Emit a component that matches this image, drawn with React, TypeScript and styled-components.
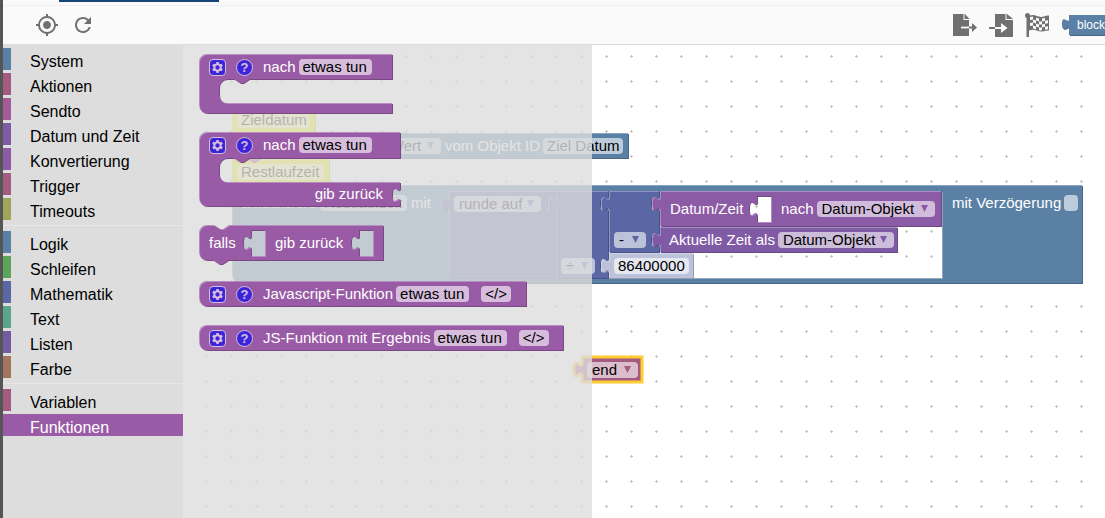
import React, { useId } from "react";
import styled, { createGlobalStyle } from "styled-components";
import { MdMyLocation, MdRefresh } from "react-icons/md";

const FONT = '"Liberation Sans", Arial, sans-serif';

const GlobalStyle = createGlobalStyle`
  * { box-sizing: border-box; }
  html, body { margin: 0; padding: 0; }
  body { background: #fff; font-family: ${FONT}; overflow: hidden; }
  button, input, select { font-family: inherit; }
`;

const color = {
  blue: "#5b80a5",
  rose: "#a55b80",
  purple: "#995ba5",
  math: "#5b67a5",
  number: "#bdc2db",
  convert: "#8c5ba5",
  date: "#805ba5",
  comment: "#f5f000",
};

/* ---------- page frame ---------- */

const Page = styled.div`
  display: flex;
  flex-direction: column;
  height: 100vh;
  border-left: 3px solid #555;
  background: #fafafa;
`;

const TabStrip = styled.div`
  flex: none;
  height: 6px;
  padding-left: 56px;
  border-bottom: 1px solid #efefef;
`;

const TabIndicator = styled.div`
  width: 160px;
  height: 2px;
  background: #164477;
`;

const Toolbar = styled.header`
  flex: none;
  display: flex;
  align-items: center;
  height: 39px;
  padding-left: 32px;
  gap: 12px;
  border-bottom: 1px solid #dcdcdc;
  background: #fafafa;
  overflow: hidden;
`;

const ToolButton = styled.button`
  display: flex;
  align-items: center;
  justify-content: center;
  width: 24px;
  height: 24px;
  padding: 0;
  border: 0;
  background: none;
  color: #707070;
  cursor: pointer;
`;

const ToolGroup = styled.div`
  display: flex;
  align-items: center;
  gap: 12px;
  margin-left: auto;
`;

const ModeButton = styled.button`
  position: relative;
  width: 36px;
  height: 21px;
  margin-left: 8px;
  padding: 0 0 0 8px;
  border: 0;
  background: none;
  color: #fff;
  font-size: 12px;
  line-height: 20px;
  text-align: left;
  white-space: nowrap;
`;

const ModeText = styled.span`
  position: relative;
`;

const Main = styled.main`
  flex: 1;
  display: flex;
  min-height: 0;
`;

/* ---------- toolbox ---------- */

const Toolbox = styled.nav`
  flex: none;
  width: 180px;
  padding-top: 3px;
  background: #ddd;
`;

const Category = styled.button<{ $color: string; $active?: boolean }>`
  display: block;
  width: 100%;
  height: 22px;
  margin-bottom: 3px;
  padding: 6px 0 0 19px;
  border: 0;
  border-left: 8px solid ${(p) => p.$color};
  background: ${(p) => (p.$active ? p.$color : "transparent")};
  color: ${(p) => (p.$active ? "#fff" : "#000")};
  font-size: 16px;
  line-height: 16px;
  text-align: left;
  cursor: pointer;
`;

const Separator = styled.hr`
  margin: 5px 0;
  border: 0;
  border-bottom: 1px solid #e8e8e8;
`;

/* ---------- canvas ---------- */

const Workspace = styled.section`
  position: relative;
  flex: 1;
  min-width: 0;
  background: #fff;
  overflow: hidden;
`;

const GridSvg = styled.svg`
  display: block;
  width: 100%;
  height: 100%;
`;

const CanvasNode = styled.div<{ $x: number; $y: number }>`
  position: absolute;
  left: ${(p) => p.$x}px;
  top: ${(p) => p.$y}px;
`;

const Flyout = styled.aside`
  position: absolute;
  inset: 0 auto 0 0;
  width: 409px;
  padding: 9px 16px;
  display: flex;
  flex-direction: column;
  align-items: flex-start;
  gap: 18px;
  background: rgba(221, 221, 221, 0.8);
`;

/* ---------- blocks ---------- */

const BlockBox = styled.div<{ $w: number; $h: number; $color: string }>`
  --block: ${(p) => p.$color};
  position: relative;
  flex: none;
  width: ${(p) => p.$w}px;
  height: ${(p) => p.$h}px;
  color: #fff;
  font-size: 15px;
  line-height: 16px;
`;

const ShapeSvg = styled.svg`
  position: absolute;
  left: 0;
  top: 0;
  width: 100%;
  height: 100%;
  overflow: visible;
`;

const Contents = styled.div<{ $column?: boolean; $end?: boolean }>`
  position: relative;
  display: flex;
  flex-direction: ${(p) => (p.$column ? "column" : "row")};
  justify-content: ${(p) => (p.$end ? "flex-end" : "flex-start")};
  height: 100%;
`;

const Row = styled.div<{ $pad?: number; $h?: number; $w?: number; $top?: number; $right?: boolean }>`
  flex: none;
  display: flex;
  align-items: center;
  justify-content: ${(p) => (p.$right ? "flex-end" : "flex-start")};
  width: ${(p) => (p.$w ? `${p.$w}px` : "auto")};
  height: ${(p) => p.$h ?? 26}px;
  margin-top: ${(p) => p.$top ?? 0}px;
  padding: 0 ${(p) => (p.$right ? p.$pad ?? 5 : 0)}px 0 ${(p) => (p.$right ? 0 : p.$pad ?? 5)}px;
  white-space: nowrap;
`;

const Cavity = styled.div`
  height: 25px;
`;

const Label = styled.span`
  margin-right: 3px;
`;

const TextField = styled.input<{ $w: number }>`
  width: ${(p) => p.$w}px;
  height: 16px;
  padding: 0 2px 0 4px;
  border: 0;
  border-radius: 4px;
  outline: 0;
  background: rgba(255, 255, 255, 0.6);
  color: #000;
  font-size: 15px;
  line-height: 16px;
`;

const SelectWrap = styled.span<{ $w: number }>`
  position: relative;
  display: flex;
  width: ${(p) => p.$w}px;
  height: 16px;
`;

const Select = styled.select`
  appearance: none;
  width: 100%;
  height: 16px;
  padding: 0 0 0 5px;
  border: 0;
  border-radius: 4px;
  outline: 0;
  background: rgba(255, 255, 255, 0.6);
  color: #000;
  font-size: 15px;
  line-height: 16px;
`;

const Arrow = styled.svg`
  position: absolute;
  right: 7px;
  top: 4px;
  width: 7px;
  height: 8px;
  fill: var(--block);
  pointer-events: none;
`;

const CodeButton = styled.button`
  width: 30px;
  height: 16px;
  margin-left: 12px;
  padding: 0;
  border: 0;
  border-radius: 4px;
  background: rgba(255, 255, 255, 0.6);
  color: #000;
  font-size: 15px;
  line-height: 16px;
`;

const Check = styled.input`
  appearance: none;
  width: 14px;
  height: 16px;
  margin: 0;
  border-radius: 4px;
  background: rgba(255, 255, 255, 0.6);
`;

const CheckLabel = styled.label`
  display: flex;
  align-items: center;
  gap: 3px;
`;

const BlockIcon = styled.button<{ $round?: boolean }>`
  display: flex;
  align-items: center;
  justify-content: center;
  width: 17px;
  height: 17px;
  margin-right: 10px;
  padding: 0;
  border: 1px solid #fff;
  border-radius: ${(p) => (p.$round ? "9px" : "4px")};
  background: #00f;
  color: #fff;
  font-size: 13px;
  font-weight: bold;
  line-height: 15px;
  opacity: 0.6;
`;

const Slot = styled.div`
  flex: none;
  display: flex;
  width: 494px;
  height: 88px;
  margin-top: 6px;
`;

const Stack = styled.div`
  display: flex;
  flex-direction: column;
`;

const Line = styled.div`
  display: flex;
`;

/* Puzzle outline fragments, drawn clockwise from the top left corner. */
const NOTCH_RIGHT = "l6,4 3,0 6,-4";
const NOTCH_LEFT = "l-6,4 -3,0 -6,-4";
const SOCKET_DOWN = "c0,10 -8,-8 -8,7.5 s8,-2.5 8,7.5";
const TAB_UP = "c0,-10 -8,8 -8,-7.5 s8,2.5 8,-7.5";
const ROUND_TOP = "M0,8 A8,8 0 0,1 8,0";
const ROUND_BOTTOM = "H8 a8,8 0 0,1 -8,-8 z";

const hole = (x: number, y: number, w: number, h: number) =>
  `M${x},${y} h${w} v${h} h${-w} V${y + 20} ${TAB_UP} z`;

const valueBlock = (w: number, h: number, sockets: number[] = []) =>
  `M0,0 H${w - 1} ${sockets.map((y) => `V${y + 5} ${SOCKET_DOWN}`).join(" ")} V${h - 1} H0 V20 ${TAB_UP} z`;

const stackBlock = (w: number, h: number) =>
  `M0,0 H15 ${NOTCH_RIGHT} H${w - 1} V${h - 1} H29 ${NOTCH_LEFT} H0 z`;

const roundBlock = (w: number, h: number) => `${ROUND_TOP} H${w - 1} V${h - 1} ${ROUND_BOTTOM}`;

type BlockProps = {
  w: number;
  h: number;
  fill: string;
  path: string;
  column?: boolean;
  end?: boolean;
  selected?: boolean;
  children?: React.ReactNode;
};

function Block({ w, h, fill, path, column, end, selected, children }: BlockProps) {
  const id = useId().replace(/:/g, "");
  return (
    <BlockBox $w={w} $h={h} $color={fill}>
      <ShapeSvg aria-hidden="true">
        <clipPath id={id}>
          <path d={path} clipRule="evenodd" />
        </clipPath>
        <path
          d={path}
          fillRule="evenodd"
          transform="translate(1 1)"
          style={{ fill: `color-mix(in srgb, ${fill} 80%, black)` }}
        />
        <path d={path} fillRule="evenodd" style={{ fill: `color-mix(in srgb, ${fill} 70%, white)` }} />
        <g clipPath={`url(#${id})`}>
          <path d={path} fillRule="evenodd" transform="translate(1 1)" fill={fill} />
        </g>
        {selected && <path d={path} fill="none" stroke="#fc3" strokeWidth="3" />}
      </ShapeSvg>
      <Contents $column={column} $end={end}>
        {children}
      </Contents>
    </BlockBox>
  );
}

function Dropdown({ w, value, label }: { w: number; value: string; label: string }) {
  return (
    <SelectWrap $w={w}>
      <Select aria-label={label} defaultValue={value}>
        <option>{value}</option>
      </Select>
      <Arrow viewBox="0 0 7 8" aria-hidden="true">
        <path d="M0,0 H7 L3.5,7 z" />
      </Arrow>
    </SelectWrap>
  );
}

function FunctionIcons() {
  return (
    <>
      <BlockIcon aria-label="Parameter">
        <svg width="15" height="15" viewBox="1 1 14 14">
          <path
            fill="#fff"
            d="m4.203,7.296 0,1.368 -0.92,0.677 -0.11,0.41 0.9,1.559 0.41,0.11 1.043,-0.457 1.187,0.683 0.127,1.134 0.3,0.3 1.8,0 0.3,-0.299 0.127,-1.138 1.185,-0.682 1.046,0.458 0.409,-0.11 0.9,-1.559 -0.11,-0.41 -0.92,-0.677 0,-1.366 0.92,-0.677 0.11,-0.41 -0.9,-1.559 -0.409,-0.109 -1.046,0.458 -1.185,-0.682 -0.127,-1.138 -0.3,-0.299 -1.8,0 -0.3,0.3 -0.126,1.135 -1.187,0.682 -1.043,-0.457 -0.41,0.11 -0.899,1.559 0.108,0.409z"
          />
          <circle cx="8" cy="8" r="2" fill="#00f" />
        </svg>
      </BlockIcon>
      <BlockIcon $round>?</BlockIcon>
    </>
  );
}

/* ---------- toolbar drawings ---------- */

const ExportIcon = () => (
  <svg width="24" height="24" viewBox="0 0 24 24" fill="#707070">
    <path d="M0,1 H10.500 V7 H16 V23 H0 z M11.500,0.500 L16.500,6 H11.500 z" />
    <path d="M8,14.500 H16" stroke="#fafafa" strokeWidth="1.800" />
    <path d="M16,13.500 H19 V10 L24,14.500 L19,19 V15.500 H16 z" />
  </svg>
);

const ImportIcon = () => (
  <svg width="24" height="24" viewBox="0 0 24 24" fill="#707070">
    <path d="M6,1 H16.500 V7 H24 V24 H6 z M17.500,0.500 L24,6 H17.500 z" />
    <path d="M0,14 H6 V16 H0 z" />
    <path d="M6,14 H12 V10 L18.500,15 L12,20 V16 H6 z" fill="#fafafa" />
  </svg>
);

/* Vertical wave offset of the flag cloth at each column edge. */
const WAVE = [0, -0.5, 0.4, 1.4, 1.6, 0.8, 0.2];

const flagCells = [0, 1, 2, 3, 4, 5].flatMap((c) =>
  [0, 1, 2, 3]
    .filter((r) => (r + c) % 2 === 0)
    .map((r) => {
      const x = 5 + c * 3;
      const y = 4 + r * 3;
      return `M${x},${y + WAVE[c]} L${x + 3},${y + WAVE[c + 1]} v3 L${x},${y + 3 + WAVE[c]} z`;
    })
);

const FlagIcon = () => (
  <svg width="24" height="24" viewBox="0 0 24 24" fill="#707070">
    <circle cx="2.500" cy="2.500" r="2.500" />
    <path d="M1.500,2 H4 V24 H1.500 z" />
    <path d="M4,3 C9,0.500 12,4 16,4 C19,4 21,2 24,2.500 V17.500 C21,17 19,18.500 16,18.500 C12,18.500 9,15.500 4,17.500 z" />
    <path fill="#fafafa" d={flagCells.join(" ")} />
  </svg>
);

const MODE_SHAPE = "M0,0 H60 V20 H0 V14 c0,-6 -7,6 -7,-5 s7,1 7,-5 z";

const CATEGORIES: ([string, string] | null)[] = [
  ["System", color.blue],
  ["Aktionen", color.rose],
  ["Sendto", "#a55b99"],
  ["Datum und Zeit", color.date],
  ["Konvertierung", color.convert],
  ["Trigger", color.rose],
  ["Timeouts", "#9fa55b"],
  null,
  ["Logik", color.blue],
  ["Schleifen", "#5ba55b"],
  ["Mathematik", color.math],
  ["Text", "#5ba58c"],
  ["Listen", "#745ba5"],
  ["Farbe", "#a5745b"],
  null,
  ["Variablen", color.rose],
  ["Funktionen", color.purple],
];

const CAVITY_LEFT = `H50 ${NOTCH_LEFT} h-7 a8,8 0 0,0 -8,8 v8 a8,8 0 0,0 8,8`;

const PROCEDURE = `${ROUND_TOP} H193 V25 ${CAVITY_LEFT} H193 V59 ${ROUND_BOTTOM}`;
const PROCEDURE_RETURN = `${ROUND_TOP} H201 V26 ${CAVITY_LEFT} H201 v5 ${SOCKET_DOWN} V74 ${ROUND_BOTTOM}`;
const IF_RETURN = `${ROUND_TOP} H15 ${NOTCH_RIGHT} H184 V35 H29 ${NOTCH_LEFT} ${ROUND_BOTTOM} ${hole(
  52, 5, 14, 26
)} ${hole(160, 5, 14, 26)}`;
const UPDATE = `M0,0 H15 ${NOTCH_RIGHT} H850 V98 H29 ${NOTCH_LEFT} H8 a8,8 0 0,1 -8,-8 z ${hole(217, 6, 493, 87)}`;

function ScriptStack() {
  return (
    <Stack>
      <Block w={84} h={26} fill={color.comment} path={stackBlock(84, 26)}>
        <Row>
          <TextField $w={73} aria-label="Kommentar" defaultValue="Zieldatum" />
        </Row>
      </Block>
      <Line>
        <Block w={148} h={26} fill={color.rose} path={stackBlock(148, 26)} />
        <Block w={249} h={26} fill={color.blue} path={valueBlock(249, 26)} end>
          <Row $right $pad={6}>
            <Dropdown w={56} value="Wert" label="Eigenschaft" />
            <Label>&nbsp;vom Objekt ID</Label>
            <TextField $w={80} aria-label="Objekt ID" defaultValue="Ziel Datum" />
          </Row>
        </Block>
      </Line>
      <Block w={98} h={26} fill={color.comment} path={stackBlock(98, 26)}>
        <Row>
          <TextField $w={87} aria-label="Kommentar" defaultValue="Restlaufzeit" />
        </Row>
      </Block>
      <Block w={851} h={99} fill={color.blue} path={UPDATE}>
        <Row $w={217} $top={5} $pad={9}>
          <Label>aktualisiere</Label>
          <TextField $w={87} aria-label="Zielobjekt" defaultValue="Restlaufzeit" />
          <Label>&nbsp;mit</Label>
        </Row>
        <Slot>
          <Block w={107} h={88} fill={color.math} path={valueBlock(107, 88, [0])}>
            <Row>
              <Dropdown w={87} value="runde auf" label="Rundung" />
            </Row>
          </Block>
          <Block w={53} h={88} fill={color.math} path={valueBlock(53, 88, [0, 62])}>
            <Row $top={62}>
              <Dropdown w={34} value="÷" label="Operator" />
            </Row>
          </Block>
          <Stack>
            <Line>
              <Block w={51} h={62} fill={color.math} path={valueBlock(51, 62, [0, 36])}>
                <Row $top={36}>
                  <Dropdown w={32} value="-" label="Operator" />
                </Row>
              </Block>
              <Stack>
                <Block
                  w={282}
                  h={36}
                  fill={color.convert}
                  path={`${valueBlock(282, 36)} ${hole(97, 5, 14, 26)}`}
                >
                  <Row $w={121} $h={36} $pad={10}>
                    <Label>Datum/Zeit</Label>
                  </Row>
                  <Row $h={36} $pad={0}>
                    <Label>nach</Label>
                    <Dropdown w={118} value="Datum-Objekt" label="Zielformat" />
                  </Row>
                </Block>
                <Block w={238} h={26} fill={color.date} path={valueBlock(238, 26)}>
                  <Row $pad={9}>
                    <Label>Aktuelle Zeit als</Label>
                    <Dropdown w={116} value="Datum-Objekt" label="Zeitformat" />
                  </Row>
                </Block>
              </Stack>
            </Line>
            <Block w={85} h={26} fill={color.number} path={valueBlock(85, 26)}>
              <Row>
                <TextField $w={75} aria-label="Zahl" defaultValue="86400000" />
              </Row>
            </Block>
          </Stack>
        </Slot>
        <Row $top={5} $pad={9}>
          <CheckLabel>
            mit Verzögerung
            <Check type="checkbox" />
          </CheckLabel>
        </Row>
      </Block>
    </Stack>
  );
}

export default function App() {
  return (
    <>
      <GlobalStyle />
      <Page>
        <TabStrip>
          <TabIndicator />
        </TabStrip>
        <Toolbar>
          <ToolButton aria-label="Zentrieren">
            <MdMyLocation size={24} />
          </ToolButton>
          <ToolButton aria-label="Neu laden">
            <MdRefresh size={24} />
          </ToolButton>
          <ToolGroup>
            <ToolButton aria-label="Exportieren">
              <ExportIcon />
            </ToolButton>
            <ToolButton aria-label="Importieren">
              <ImportIcon />
            </ToolButton>
            <ToolButton aria-label="Prüfen">
              <FlagIcon />
            </ToolButton>
            <ModeButton>
              <ShapeSvg aria-hidden="true">
                <path d={MODE_SHAPE} fill="#486684" transform="translate(1 1)" />
                <path d={MODE_SHAPE} fill={color.blue} />
              </ShapeSvg>
              <ModeText>block</ModeText>
            </ModeButton>
          </ToolGroup>
        </Toolbar>
        <Main>
          <Toolbox>
            {CATEGORIES.map((item, i) =>
              item ? (
                <Category key={item[0]} $color={item[1]} $active={item[0] === "Funktionen"}>
                  {item[0]}
                </Category>
              ) : (
                <Separator key={i} />
              )
            )}
          </Toolbox>
          <Workspace>
            <GridSvg aria-hidden="true">
              <pattern id="grid" width="25" height="25" patternUnits="userSpaceOnUse">
                <path d="M22,11 h3 v1 h-3 z M23,10 h1 v3 h-1 z" fill="#c4c4c4" />
              </pattern>
              <rect width="100%" height="100%" fill="url(#grid)" />
            </GridSvg>
            <CanvasNode $x={49} $y={62}>
              <ScriptStack />
            </CanvasNode>
            <CanvasNode $x={399} $y={312}>
              <Block w={61} h={26} fill={color.rose} path={valueBlock(61, 26)} selected>
                <Row>
                  <Dropdown w={51} value="end" label="Variable" />
                </Row>
              </Block>
            </CanvasNode>
            <Flyout>
              <Block w={194} h={60} fill={color.purple} path={PROCEDURE} column>
                <Row $pad={10}>
                  <FunctionIcons />
                  <Label>nach</Label>
                  <TextField $w={73} aria-label="Funktionsname" defaultValue="etwas tun" />
                </Row>
              </Block>
              <Block w={202} h={75} fill={color.purple} path={PROCEDURE_RETURN} column>
                <Row $pad={10}>
                  <FunctionIcons />
                  <Label>nach</Label>
                  <TextField $w={73} aria-label="Funktionsname" defaultValue="etwas tun" />
                </Row>
                <Cavity />
                <Row $right $pad={15}>
                  <Label>gib zurück</Label>
                </Row>
              </Block>
              <Block w={185} h={38} fill={color.purple} path={IF_RETURN}>
                <Row $h={36} $w={76} $pad={10}>
                  falls
                </Row>
                <Row $h={36} $pad={0}>
                  gib zurück
                </Row>
              </Block>
              <Block w={328} h={26} fill={color.purple} path={roundBlock(328, 26)}>
                <Row $pad={10}>
                  <FunctionIcons />
                  <Label>Javascript-Funktion</Label>
                  <TextField $w={73} aria-label="Funktionsname" defaultValue="etwas tun" />
                  <CodeButton>&lt;/&gt;</CodeButton>
                </Row>
              </Block>
              <Block w={365} h={26} fill={color.purple} path={roundBlock(365, 26)}>
                <Row $pad={10}>
                  <FunctionIcons />
                  <Label>JS-Funktion mit Ergebnis</Label>
                  <TextField $w={73} aria-label="Funktionsname" defaultValue="etwas tun" />
                  <CodeButton>&lt;/&gt;</CodeButton>
                </Row>
              </Block>
            </Flyout>
          </Workspace>
        </Main>
      </Page>
    </>
  );
}
